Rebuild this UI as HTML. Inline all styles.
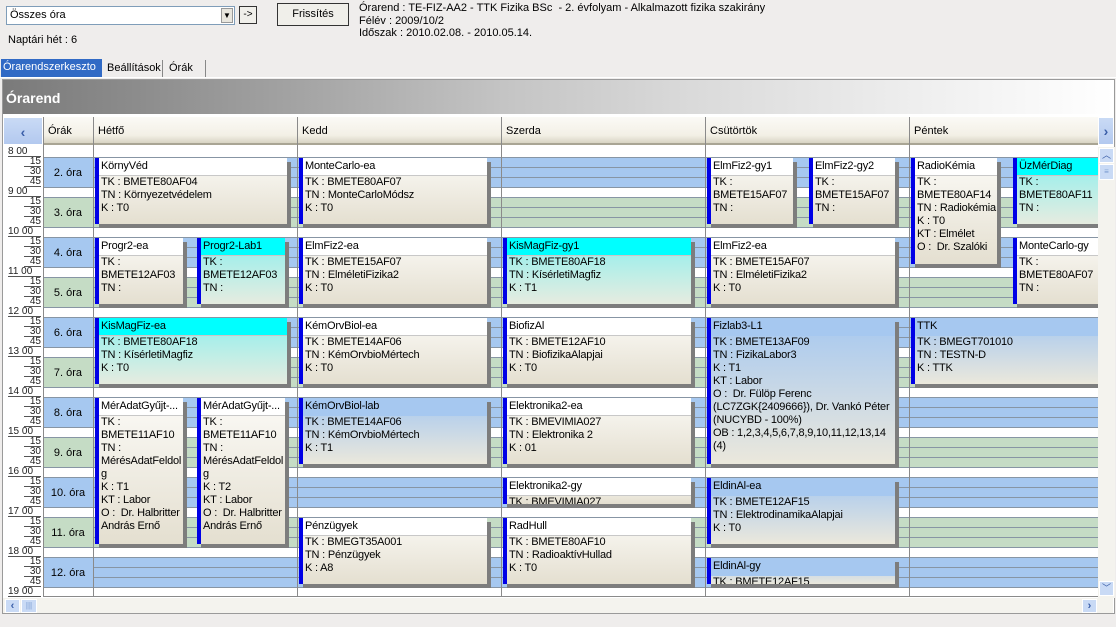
<!DOCTYPE html>
<html><head><meta charset="utf-8"><style>
*{margin:0;padding:0;box-sizing:border-box}
body{width:1116px;height:627px;background:#efedec;font-family:"Liberation Sans",sans-serif;font-size:11px;color:#000;position:relative;overflow:hidden}
.a{position:absolute}
.btn{position:absolute;border:1px solid #333;background:#f0efea;text-align:center}
.grid{position:absolute;left:0;top:0;width:1098px;height:597px;overflow:hidden}
.band{position:absolute;left:93px;width:1005px;height:31px}
.bb{background:repeating-linear-gradient(to bottom,#8795a4 0 1px,#a6c8f0 1px 10px)}
.bg{background:repeating-linear-gradient(to bottom,#8795a4 0 1px,#c5dcc5 1px 10px)}
.ora{position:absolute;left:43px;width:50px;height:31px;line-height:30px;text-align:center;border-top:1px solid #8795a4;border-bottom:1px solid #8795a4}
.vl{position:absolute;top:117px;width:1px;height:480px;background:#8a8a8a}
.hd{position:absolute;top:117px;height:28px;line-height:28px;padding-left:5px;background:linear-gradient(#fbfaf6,#f3f0e6 70%,#d8d4c4);border-bottom:2px solid #a9a594}
.ev{position:absolute;border-left:4px solid #0000e6;box-shadow:4px 4px 0 #7d7d7d;overflow:hidden;background:linear-gradient(#fbfaf6,#e4dfd0);letter-spacing:-0.2px}
.ev .t{height:18px;line-height:17px;padding-left:2px;background:#fff;border-bottom:1px solid #c8c8c8;white-space:nowrap}
.ev .b{padding-left:2px;line-height:13px;white-space:nowrap}
.cy{background:linear-gradient(#8ef0ee,#e6ece0)}
.cy .t{background:#00ffff}
.bl{background:linear-gradient(#a6c8f0,#ebe8dc)}
.bl .t{background:#a6c8f0;border-bottom:1px solid #a6c8f0}
.tm{position:absolute;font-size:10px;line-height:9px;border-bottom:1px solid #555;text-align:right;color:#222}
</style></head><body>

<div class="a" style="left:6px;top:6px;width:229px;height:19px;background:#fff;border:1px solid #7f9db9;padding:2px 3px;line-height:13px">Összes óra</div>
<div class="a" style="left:221px;top:8px;width:12px;height:15px;background:#e8e6de;border:1px solid #999;font-size:8px;text-align:center;line-height:14px">▼</div>
<div class="btn" style="left:239px;top:6px;width:18px;height:18px;line-height:16px;font-size:10px">-&gt;</div>
<div class="btn" style="left:277px;top:3px;width:72px;height:23px;line-height:21px">Frissítés</div>
<div class="a" style="left:359px;top:2px;line-height:12.5px">Órarend : TE-FIZ-AA2 - TTK Fizika BSc&nbsp; - 2. évfolyam - Alkalmazott fizika szakirány<br>Félév : 2009/10/2<br>Időszak : 2010.02.08. - 2010.05.14.</div>
<div class="a" style="left:8px;top:34px">Naptári hét : 6</div>

<div class="a" style="left:1px;top:59px;width:101px;height:18px;background:#316ac5;color:#fff;padding-left:2px;line-height:16px">Órarendszerkeszto</div>
<div class="a" style="left:103px;top:60px;width:60px;height:17px;border-right:1px solid #888;padding-left:4px;line-height:16px">Beállítások</div>
<div class="a" style="left:164px;top:60px;width:42px;height:17px;border-right:1px solid #888;padding-left:5px;line-height:16px">Órák</div>
<div class="a" style="left:0;top:77px;width:1116px;height:1px;background:#fff"></div>

<div class="a" style="left:2px;top:79px;width:1113px;height:535px;border:1px solid #9a9a9a;background:#fff"></div>
<div class="a" style="left:3px;top:80px;width:1111px;height:34px;background:linear-gradient(to right,#7a7a7a 0%,#8c8c8c 12%,#a6a6a6 28%,#c4c4c4 45%,#dadada 62%,#ececec 80%,#ffffff 100%);color:#fff;font-weight:bold;font-size:14px;line-height:36px;padding-left:3px">Órarend</div>

<div class="grid">
<div class="hd" style="left:3px;width:40px;padding:0;background:linear-gradient(#c9daf5,#b3c9ef);border:1px solid #fff;color:#3a5ea8;font-weight:bold;font-size:14px;text-align:center">‹</div>
<div class="hd" style="left:43px;width:50px">Órák</div>
<div class="hd" style="left:93px;width:204px">Hétfő</div>
<div class="hd" style="left:297px;width:204px">Kedd</div>
<div class="hd" style="left:501px;width:204px">Szerda</div>
<div class="hd" style="left:705px;width:204px">Csütörtök</div>
<div class="hd" style="left:909px;width:189px">Péntek</div>

<div class="band bb" style="top:157px"></div><div class="ora" style="top:157px;background:#a6c8f0">2. óra</div>
<div class="band bg" style="top:197px"></div><div class="ora" style="top:197px;background:#c5dcc5">3. óra</div>
<div class="band bb" style="top:237px"></div><div class="ora" style="top:237px;background:#a6c8f0">4. óra</div>
<div class="band bg" style="top:277px"></div><div class="ora" style="top:277px;background:#c5dcc5">5. óra</div>
<div class="band bb" style="top:317px"></div><div class="ora" style="top:317px;background:#a6c8f0">6. óra</div>
<div class="band bg" style="top:357px"></div><div class="ora" style="top:357px;background:#c5dcc5">7. óra</div>
<div class="band bb" style="top:397px"></div><div class="ora" style="top:397px;background:#a6c8f0">8. óra</div>
<div class="band bg" style="top:437px"></div><div class="ora" style="top:437px;background:#c5dcc5">9. óra</div>
<div class="band bb" style="top:477px"></div><div class="ora" style="top:477px;background:#a6c8f0">10. óra</div>
<div class="band bg" style="top:517px"></div><div class="ora" style="top:517px;background:#c5dcc5">11. óra</div>
<div class="band bb" style="top:557px"></div><div class="ora" style="top:557px;background:#a6c8f0">12. óra</div>
<div class="a" style="left:43px;top:596px;width:1055px;height:1px;background:#8a8a8a"></div>

<div class="tm" style="left:8px;top:147px;width:33px;text-align:left">8 00</div>
<div class="tm" style="left:24px;top:157px;width:17px">15</div><div class="tm" style="left:24px;top:167px;width:17px">30</div><div class="tm" style="left:24px;top:177px;width:17px">45</div>
<div class="tm" style="left:8px;top:187px;width:33px;text-align:left">9 00</div>
<div class="tm" style="left:24px;top:197px;width:17px">15</div><div class="tm" style="left:24px;top:207px;width:17px">30</div><div class="tm" style="left:24px;top:217px;width:17px">45</div>
<div class="tm" style="left:8px;top:227px;width:33px;text-align:left">10 00</div>
<div class="tm" style="left:24px;top:237px;width:17px">15</div><div class="tm" style="left:24px;top:247px;width:17px">30</div><div class="tm" style="left:24px;top:257px;width:17px">45</div>
<div class="tm" style="left:8px;top:267px;width:33px;text-align:left">11 00</div>
<div class="tm" style="left:24px;top:277px;width:17px">15</div><div class="tm" style="left:24px;top:287px;width:17px">30</div><div class="tm" style="left:24px;top:297px;width:17px">45</div>
<div class="tm" style="left:8px;top:307px;width:33px;text-align:left">12 00</div>
<div class="tm" style="left:24px;top:317px;width:17px">15</div><div class="tm" style="left:24px;top:327px;width:17px">30</div><div class="tm" style="left:24px;top:337px;width:17px">45</div>
<div class="tm" style="left:8px;top:347px;width:33px;text-align:left">13 00</div>
<div class="tm" style="left:24px;top:357px;width:17px">15</div><div class="tm" style="left:24px;top:367px;width:17px">30</div><div class="tm" style="left:24px;top:377px;width:17px">45</div>
<div class="tm" style="left:8px;top:387px;width:33px;text-align:left">14 00</div>
<div class="tm" style="left:24px;top:397px;width:17px">15</div><div class="tm" style="left:24px;top:407px;width:17px">30</div><div class="tm" style="left:24px;top:417px;width:17px">45</div>
<div class="tm" style="left:8px;top:427px;width:33px;text-align:left">15 00</div>
<div class="tm" style="left:24px;top:437px;width:17px">15</div><div class="tm" style="left:24px;top:447px;width:17px">30</div><div class="tm" style="left:24px;top:457px;width:17px">45</div>
<div class="tm" style="left:8px;top:467px;width:33px;text-align:left">16 00</div>
<div class="tm" style="left:24px;top:477px;width:17px">15</div><div class="tm" style="left:24px;top:487px;width:17px">30</div><div class="tm" style="left:24px;top:497px;width:17px">45</div>
<div class="tm" style="left:8px;top:507px;width:33px;text-align:left">17 00</div>
<div class="tm" style="left:24px;top:517px;width:17px">15</div><div class="tm" style="left:24px;top:527px;width:17px">30</div><div class="tm" style="left:24px;top:537px;width:17px">45</div>
<div class="tm" style="left:8px;top:547px;width:33px;text-align:left">18 00</div>
<div class="tm" style="left:24px;top:557px;width:17px">15</div><div class="tm" style="left:24px;top:567px;width:17px">30</div><div class="tm" style="left:24px;top:577px;width:17px">45</div>
<div class="tm" style="left:8px;top:587px;width:33px;text-align:left">19 00</div>

<div class="vl" style="left:43px"></div>
<div class="vl" style="left:93px"></div>
<div class="vl" style="left:297px"></div>
<div class="vl" style="left:501px"></div>
<div class="vl" style="left:705px"></div>
<div class="vl" style="left:909px"></div>

<div class="ev" style="left:95px;top:158px;width:192px;height:66px"><div class="t">KörnyVéd</div><div class="b">TK : BMETE80AF04<br>TN : Környezetvédelem<br>K : T0</div></div>
<div class="ev" style="left:95px;top:238px;width:88px;height:66px"><div class="t">Progr2-ea</div><div class="b">TK :<br>BMETE12AF03<br>TN :</div></div>
<div class="ev cy" style="left:197px;top:238px;width:88px;height:66px"><div class="t">Progr2-Lab1</div><div class="b">TK :<br>BMETE12AF03<br>TN :</div></div>
<div class="ev cy" style="left:95px;top:318px;width:192px;height:66px"><div class="t">KisMagFiz-ea</div><div class="b">TK : BMETE80AF18<br>TN : KísérletiMagfiz<br>K : T0</div></div>
<div class="ev" style="left:95px;top:398px;width:88px;height:146px"><div class="t">MérAdatGyűjt-...</div><div class="b">TK :<br>BMETE11AF10<br>TN :<br>MérésAdatFeldol<br>g<br>K : T1<br>KT : Labor<br>O :&nbsp; Dr. Halbritter<br>András Ernő</div></div>
<div class="ev" style="left:197px;top:398px;width:88px;height:146px"><div class="t">MérAdatGyűjt-...</div><div class="b">TK :<br>BMETE11AF10<br>TN :<br>MérésAdatFeldol<br>g<br>K : T2<br>KT : Labor<br>O :&nbsp; Dr. Halbritter<br>András Ernő</div></div>

<div class="ev" style="left:299px;top:158px;width:188px;height:66px"><div class="t">MonteCarlo-ea</div><div class="b">TK : BMETE80AF07<br>TN : MonteCarloMódsz<br>K : T0</div></div>
<div class="ev" style="left:299px;top:238px;width:188px;height:66px"><div class="t">ElmFiz2-ea</div><div class="b">TK : BMETE15AF07<br>TN : ElméletiFizika2<br>K : T0</div></div>
<div class="ev" style="left:299px;top:318px;width:188px;height:66px"><div class="t">KémOrvBiol-ea</div><div class="b">TK : BMETE14AF06<br>TN : KémOrvbioMértech<br>K : T0</div></div>
<div class="ev bl" style="left:299px;top:398px;width:188px;height:66px"><div class="t">KémOrvBiol-lab</div><div class="b">TK : BMETE14AF06<br>TN : KémOrvbioMértech<br>K : T1</div></div>
<div class="ev" style="left:299px;top:518px;width:188px;height:66px"><div class="t">Pénzügyek</div><div class="b">TK : BMEGT35A001<br>TN : Pénzügyek<br>K : A8</div></div>

<div class="ev cy" style="left:503px;top:238px;width:188px;height:66px"><div class="t">KisMagFiz-gy1</div><div class="b">TK : BMETE80AF18<br>TN : KísérletiMagfiz<br>K : T1</div></div>
<div class="ev" style="left:503px;top:318px;width:188px;height:66px"><div class="t">BiofizAl</div><div class="b">TK : BMETE12AF10<br>TN : BiofizikaAlapjai<br>K : T0</div></div>
<div class="ev" style="left:503px;top:398px;width:188px;height:66px"><div class="t">Elektronika2-ea</div><div class="b">TK : BMEVIMIA027<br>TN : Elektronika 2<br>K : 01</div></div>
<div class="ev" style="left:503px;top:478px;width:188px;height:26px"><div class="t">Elektronika2-gy</div><div class="b">TK : BMEVIMIA027</div></div>
<div class="ev" style="left:503px;top:518px;width:188px;height:66px"><div class="t">RadHull</div><div class="b">TK : BMETE80AF10<br>TN : RadioaktívHullad<br>K : T0</div></div>

<div class="ev" style="left:707px;top:158px;width:86px;height:66px"><div class="t">ElmFiz2-gy1</div><div class="b">TK :<br>BMETE15AF07<br>TN :</div></div>
<div class="ev" style="left:809px;top:158px;width:86px;height:66px"><div class="t">ElmFiz2-gy2</div><div class="b">TK :<br>BMETE15AF07<br>TN :</div></div>
<div class="ev" style="left:707px;top:238px;width:188px;height:66px"><div class="t">ElmFiz2-ea</div><div class="b">TK : BMETE15AF07<br>TN : ElméletiFizika2<br>K : T0</div></div>
<div class="ev bl" style="left:707px;top:318px;width:188px;height:146px"><div class="t">Fizlab3-L1</div><div class="b">TK : BMETE13AF09<br>TN : FizikaLabor3<br>K : T1<br>KT : Labor<br>O :&nbsp; Dr. Fülöp Ferenc<br>(LC7ZGK{2409666}), Dr. Vankó Péter<br>(NUCYBD - 100%)<br>OB : 1,2,3,4,5,6,7,8,9,10,11,12,13,14<br>(4)</div></div>
<div class="ev bl" style="left:707px;top:478px;width:188px;height:66px"><div class="t">EldinAl-ea</div><div class="b">TK : BMETE12AF15<br>TN : ElektrodinamikaAlapjai<br>K : T0</div></div>
<div class="ev bl" style="left:707px;top:558px;width:188px;height:26px"><div class="t">EldinAl-gy</div><div class="b">TK : BMETE12AF15</div></div>

<div class="ev" style="left:911px;top:158px;width:86px;height:106px"><div class="t">RadioKémia</div><div class="b">TK :<br>BMETE80AF14<br>TN : Radiokémia<br>K : T0<br>KT : Elmélet<br>O :&nbsp; Dr. Szalóki</div></div>
<div class="ev cy" style="left:1013px;top:158px;width:88px;height:66px"><div class="t">ÜzMérDiag</div><div class="b">TK :<br>BMETE80AF11<br>TN :</div></div>
<div class="ev" style="left:1013px;top:238px;width:88px;height:66px"><div class="t">MonteCarlo-gy</div><div class="b">TK :<br>BMETE80AF07<br>TN :</div></div>
<div class="ev bl" style="left:911px;top:318px;width:190px;height:66px"><div class="t">TTK</div><div class="b">TK : BMEGT701010<br>TN : TESTN-D<br>K : TTK</div></div>
</div>

<div class="a" style="left:1098px;top:117px;width:16px;height:28px;background:linear-gradient(#c9daf5,#b3c9ef);border:1px solid #fff;color:#3a5ea8;font-weight:bold;font-size:14px;text-align:center;line-height:26px">›</div>
<div class="a" style="left:1098px;top:147px;width:17px;height:451px;background:#f4f3ee"></div>
<div class="a" style="left:1099px;top:148px;width:15px;height:15px;background:#c9daf5;border:1px solid #fff;color:#3a5ea8;font-size:9px;text-align:center;line-height:13px">︿</div>
<div class="a" style="left:1099px;top:164px;width:15px;height:16px;background:#c9daf5;border:1px solid #fff;color:#7a9ad0;font-size:8px;text-align:center;line-height:14px">≡</div>
<div class="a" style="left:1099px;top:581px;width:15px;height:15px;background:#c9daf5;border:1px solid #fff;color:#3a5ea8;font-size:9px;text-align:center;line-height:13px">﹀</div>
<div class="a" style="left:3px;top:598px;width:1110px;height:15px;background:#f4f3ee"></div>
<div class="a" style="left:5px;top:599px;width:15px;height:14px;background:#c9daf5;border:1px solid #fff;color:#3a5ea8;font-weight:bold;text-align:center;line-height:12px">‹</div>
<div class="a" style="left:21px;top:599px;width:16px;height:14px;background:#c9daf5;border:1px solid #fff;color:#7a9ad0;font-size:8px;text-align:center;line-height:12px">|||</div>
<div class="a" style="left:1082px;top:599px;width:15px;height:14px;background:#c9daf5;border:1px solid #fff;color:#3a5ea8;font-weight:bold;text-align:center;line-height:12px">›</div>
<div class="a" style="left:0;top:614px;width:1116px;height:13px;background:#efedec"></div>
</body></html>
